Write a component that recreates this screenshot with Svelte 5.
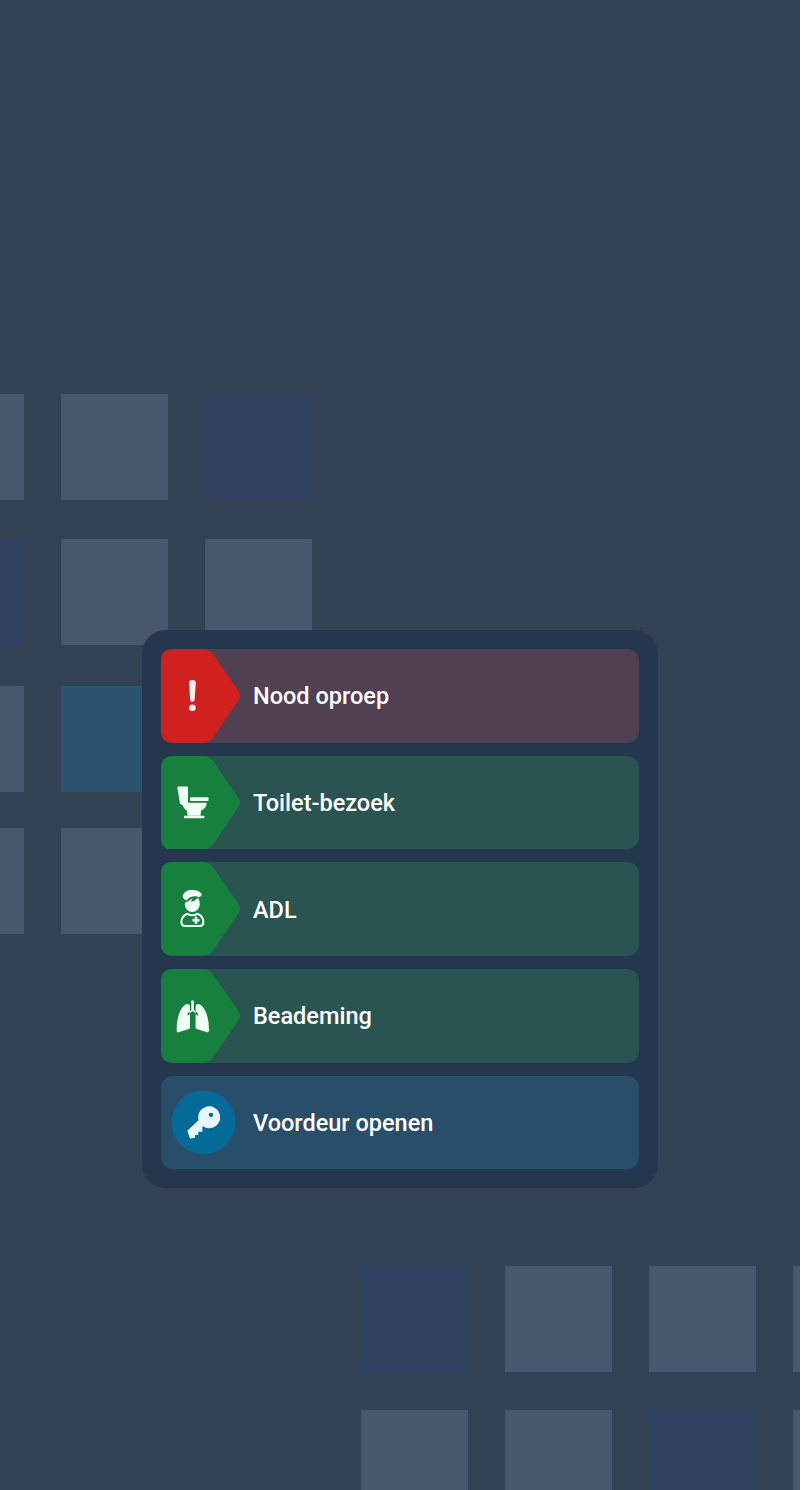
<script lang="ts">
    const clusters = [
        {
            name: 'left',
            rows: [
                { top: 394, tiles: ['plain', 'plain', 'dark'] },
                { top: 539, tiles: ['dark', 'plain', 'plain'] },
                { top: 686, tiles: ['plain', 'teal', 'plain'] },
                { top: 828, tiles: ['plain', 'plain', 'plain'] },
            ],
        },
        {
            name: 'right',
            rows: [
                { top: 1266, tiles: ['dark', 'plain', 'plain', 'plain'] },
                { top: 1410, tiles: ['plain', 'plain', 'dark', 'plain'] },
            ],
        },
    ];

    const alerts = [
        { label: 'Nood oproep', tone: 'red', icon: 'alert' },
        { label: 'Toilet-bezoek', tone: 'green', icon: 'toilet' },
        { label: 'ADL', tone: 'green', icon: 'nurse' },
        { label: 'Beademing', tone: 'green', icon: 'lungs' },
        { label: 'Voordeur openen', tone: 'blue', icon: 'key' },
    ];
</script>

<main class="page">
    {#each clusters as cluster}
        <div class="tiles {cluster.name}">
            {#each cluster.rows as row}
                <div class="tile-row" style="top: {row.top}px">
                    {#each row.tiles as tile}
                        <span class="tile {tile}"></span>
                    {/each}
                </div>
            {/each}
        </div>
    {/each}

    <section class="card">
        {#each alerts as alert}
            <button class="alert {alert.tone}">
                <svg class="badge" viewBox="0 0 79 94" preserveAspectRatio="none" aria-hidden="true">
                    {#if alert.icon === 'key'}
                        <circle class="shape" cx="42.5" cy="46.5" r="32" />
                    {:else}
                        <path class="shape" d="M12 0H42Q48 0 52 5L77.5 42.5Q80.5 47 77.5 51.5L52 89Q48 94 42 94H12Q0 94 0 82V12Q0 0 12 0Z" />
                    {/if}

                    {#if alert.icon === 'alert'}
                        <path class="glyph" d="M28 34Q28 31 31.4 31Q34.8 31 34.8 34L33.6 51Q33.4 53 31.4 53Q29.4 53 29.2 51Z" />
                        <circle class="glyph" cx="31.4" cy="59" r="3.3" />
                    {:else if alert.icon === 'toilet'}
                        <path class="glyph" d="M17.5 30.5H26Q27 30.5 27 31.5V49H21Q19.5 49 19 47.5L16.4 32Q16.3 30.5 17.5 30.5Z" />
                        <rect class="glyph" x="29" y="41.3" width="18.5" height="3.8" rx="1" />
                        <path class="glyph" d="M21.3 47H45.8Q45.6 52.5 40 55L39.5 60H26.5L26 55Q21.5 52.5 21.3 47Z" />
                        <rect class="glyph" x="23" y="60" width="20.3" height="2.4" rx=".5" />
                    {:else if alert.icon === 'nurse'}
                        <path class="glyph" d="M21.6 34Q23.5 28.2 31 28.2Q38.5 28.2 41 32.6L38.6 35.4Q31 32.4 25.4 38.6Q22 37.4 21.6 34Z" />
                        <path class="glyph" d="M24.6 40.4Q28 39.6 31.6 36.4Q30.8 38.6 29.6 40Q33.6 39.6 37 35.8Q39 38.6 38.8 42.7A7.5 7.5 0 0 1 23.8 42.7Q23.8 41.4 24.6 40.4Z" />
                        <path class="line" d="M26.4 52Q20.4 54.2 20.4 60.6Q20.6 64 24 64.2H39Q42.2 64 42.4 60.6Q42.4 54.2 36.4 52Q31.4 54.8 26.4 52Z" />
                        <path class="cross" d="M35 55V62M31.5 58.5H38.5" />
                    {:else if alert.icon === 'lungs'}
                        <path class="glyph" d="M30.3 31.7H32.9V41L34.8 43.2V44.6L31.6 42.2L28.6 44.6V43.2L30.3 41Z" />
                        <path class="glyph" d="M27 35.2Q29 35.4 29 38V42.4L26.6 44.6V47L29 45.2V58.6Q29 60 27.8 60.2L17.6 63.4Q15.6 63.8 15.6 61.6Q15.6 45 22.4 37.4Q24.8 35 27 35.2Z" />
                        <path class="glyph" d="M36.6 35.2Q34.6 35.4 34.6 38V42.4L37 44.6V47L34.6 45.2V58.6Q34.6 60 35.8 60.2L46 63.4Q48 63.8 48 61.6Q48 45 41.2 37.4Q38.8 35 36.6 35.2Z" />
                    {:else if alert.icon === 'key'}
                        <path class="glyph" fill-rule="evenodd" d="M37.6 44.5A11 11 0 1 1 41.5 50.2L41.3 56H37.3V59.3H34V62L29 62.7L26.3 55ZM50 36.8A2.2 2.2 0 1 0 50 41.2A2.2 2.2 0 1 0 50 36.8Z" />
                    {/if}
                </svg>
                <span class="label">{alert.label}</span>
            </button>
        {/each}
    </section>
</main>

<style>
    :global(body) {
        margin: 0;
        background: #334155;
    }

    .page {
        position: relative;
        height: 1490px;
        overflow: hidden;
        display: flex;
        justify-content: center;
        align-items: flex-start;
        padding-top: 630px;
        box-sizing: border-box;
        background: #334155;
        font-family: Roboto, sans-serif;
    }

    .tiles {
        position: absolute;
        inset: 0;
    }

    .tile-row {
        position: absolute;
        display: flex;
        gap: 37px;
    }

    .left .tile-row {
        left: -83px;
    }

    .right .tile-row {
        left: 361px;
    }

    .tile {
        display: block;
        flex: none;
        width: 107px;
        height: 106px;
        box-sizing: border-box;
        border: 1px solid #465570;
        background: #48576e;
    }

    .tile.dark {
        background: #2f4060;
        border-color: #2f4060;
    }

    .tile.teal {
        background: #2d5370;
        border-color: #2d5370;
    }

    .card {
        position: relative;
        width: 516px;
        box-sizing: border-box;
        padding: 19px;
        display: flex;
        flex-direction: column;
        gap: 13px;
        border-radius: 24px;
        background: #25374e;
    }

    .alert {
        display: flex;
        align-items: center;
        height: 93.67px;
        padding: 0;
        border: 0;
        border-radius: 12px;
        text-align: left;
        font: inherit;
        color: #fff;
    }

    .badge {
        flex: none;
        width: 79px;
        height: 100%;
    }

    .label {
        margin: 0 0 0 13px;
        padding-top: 1px;
        font-size: 23.5px;
        font-weight: 500;
    }

    .red {
        background: #514051;
    }

    .red .shape {
        fill: #d1211f;
    }

    .red .glyph {
        fill: #fdeeee;
    }

    .green {
        background: #2a5451;
    }

    .green .shape {
        fill: #18803e;
    }

    .green .glyph {
        fill: #f0fdf4;
    }

    .blue {
        background: #294e6a;
    }

    .blue .shape {
        fill: #046a98;
    }

    .blue .glyph {
        fill: #e8f6fe;
    }

    .line {
        fill: none;
        stroke: #f0fdf4;
        stroke-width: 2;
    }

    .cross {
        fill: none;
        stroke: #f0fdf4;
        stroke-width: 2.6;
    }
</style>
